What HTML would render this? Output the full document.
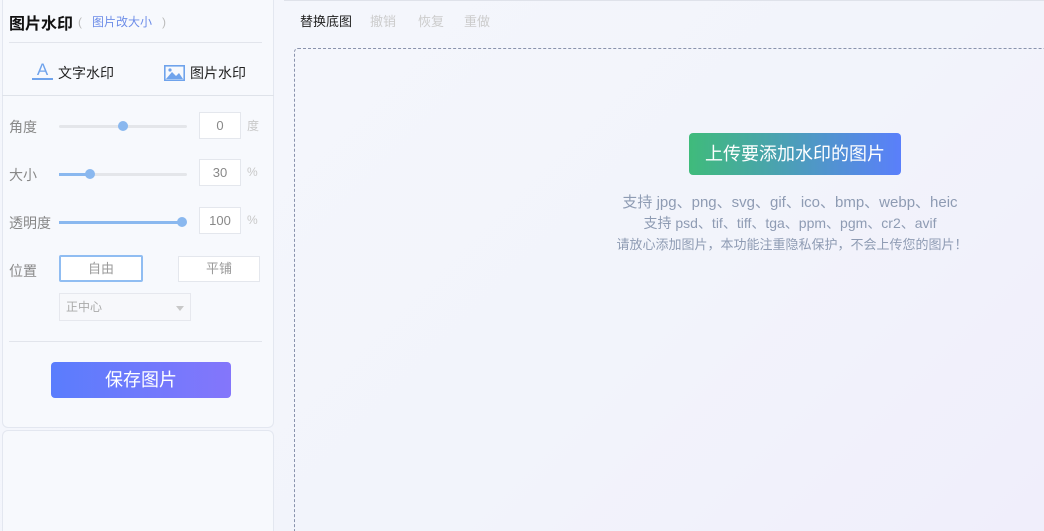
<!DOCTYPE html>
<html style="width:1044px;height:531px;overflow:hidden"><head><meta charset="utf-8"><style>
*{box-sizing:border-box;margin:0;padding:0}
body{width:1044px;height:531px;overflow:hidden;font-family:"Liberation Sans","Noto Sans CJK SC",sans-serif;background:linear-gradient(135deg,#f5f7fc,#f2f4fb 60%,#f0eefb);position:relative}
.side{position:absolute;left:2px;top:0;width:272px;height:428px;border:1px solid #e3e7f0;border-top:none;border-radius:0 0 6px 6px;background:#f7f9fd}
.side2{position:absolute;left:2px;top:430px;width:272px;height:101px;border:1px solid #e3e7f0;border-bottom:none;border-radius:6px 6px 0 0;background:#f7f9fd}
.abs{position:absolute}
.lbl{color:#888;font-size:14px}
.track{position:absolute;height:3px;background:#e4e6ea;left:59px;width:128px;border-radius:2px}
.fill{position:absolute;height:3px;background:#8ab8ef;left:0;top:0}
.dot{position:absolute;width:10px;height:10px;border-radius:50%;background:#8ab8ef;top:-4px}
.inp{position:absolute;left:199px;width:42px;height:27px;border:1px solid #e4e7ed;background:#fff;color:#888;font-size:13px;text-align:center;line-height:25px}
.unit{position:absolute;left:247px;color:#c8c8c8;font-size:12px}
.line{position:absolute;left:9px;width:253px;height:1px;background:#e2e5ec}
</style></head><body>
<div class="side"></div><div class="side2"></div>
<div class="abs" style="left:9px;top:10px;font-size:16px;font-weight:bold;color:#111">图片水印</div>
<div class="abs" style="left:78px;top:13px;font-size:12px;color:#bbb">(&nbsp;&nbsp;&nbsp;<span style="color:#6d8de8">图片改大小</span>&nbsp;&nbsp;&nbsp;)</div>
<div class="line" style="top:42px"></div>
<div class="abs" style="left:32px;top:62px;width:21px;height:18px;color:#6fa3ec;font-size:17px;text-align:center;line-height:16px;border-bottom:2px solid #6fa3ec">A</div>
<div class="abs" style="left:58px;top:63px;font-size:14px;color:#222">文字水印</div>
<svg class="abs" style="left:164px;top:65px" width="21" height="16" viewBox="0 0 21 16"><rect x="0.8" y="0.8" width="19.4" height="14.4" fill="none" stroke="#6fa3ec" stroke-width="1.6"/><path d="M2 14 L8 7 L12 11 L15 8 L19 14Z" fill="#6fa3ec"/><circle cx="6" cy="5" r="1.6" fill="#6fa3ec"/></svg>
<div class="abs" style="left:190px;top:63px;font-size:14px;color:#222">图片水印</div>
<div class="abs" style="left:2px;top:95px;width:272px;height:1px;background:#dfe3ea"></div>

<div class="abs lbl" style="left:9px;top:117px">角度</div>
<div class="track" style="top:125px"><div class="dot" style="left:59px"></div></div>
<div class="inp" style="top:112px">0</div><div class="unit" style="top:117px">度</div>

<div class="abs lbl" style="left:9px;top:165px">大小</div>
<div class="track" style="top:173px"><div class="fill" style="width:31px"></div><div class="dot" style="left:26px"></div></div>
<div class="inp" style="top:159px">30</div><div class="unit" style="top:165px">%</div>

<div class="abs lbl" style="left:9px;top:213px">透明度</div>
<div class="track" style="top:221px"><div class="fill" style="width:123px"></div><div class="dot" style="left:118px"></div></div>
<div class="inp" style="top:207px">100</div><div class="unit" style="top:213px">%</div>

<div class="abs lbl" style="left:9px;top:261px">位置</div>
<div class="abs" style="left:59px;top:255px;width:84px;height:27px;border:2px solid #90bdf2;border-radius:2px;background:#fff;color:#999;font-size:13px;text-align:center;line-height:23px">自由</div>
<div class="abs" style="left:178px;top:256px;width:82px;height:26px;border:1px solid #e4e7ed;background:#fff;color:#999;font-size:13px;text-align:center;line-height:24px">平铺</div>
<div class="abs" style="left:59px;top:293px;width:132px;height:28px;border:1px solid #e6e8ee;background:#f7f8fb;color:#aaa;font-size:12px;line-height:26px;padding-left:6px">正中心<span style="position:absolute;right:6px;top:12px;border:4px solid transparent;border-top:5px solid #c8c8c8"></span></div>
<div class="line" style="top:341px"></div>
<div class="abs" style="left:51px;top:362px;width:180px;height:36px;border-radius:4px;background:linear-gradient(90deg,#5a7dfd,#8476fb);color:#fff;font-size:18px;text-align:center;line-height:36px">保存图片</div>

<div class="abs" style="left:284px;top:0;width:760px;height:1px;background:#dfe2ea"></div>
<div class="abs" style="left:300px;top:11px;font-size:13px;color:#222">替换底图</div>
<div class="abs" style="left:370px;top:11px;font-size:13px;color:#ccc">撤销</div>
<div class="abs" style="left:418px;top:11px;font-size:13px;color:#ccc">恢复</div>
<div class="abs" style="left:464px;top:11px;font-size:13px;color:#ccc">重做</div>
<div class="abs" style="left:294px;top:48px;width:760px;height:500px;border:1px dashed #8a93ad;border-radius:4px"></div>
<div class="abs" style="left:689px;top:133px;width:212px;height:42px;border-radius:4px;background:linear-gradient(90deg,#3fbb7b,#5a7ffb);color:#fff;font-size:18px;text-align:center;line-height:42px">上传要添加水印的图片</div>
<div class="abs" style="left:580px;top:193px;width:420px;text-align:center;color:#8e9bb3;font-size:15px;line-height:20px">支持 jpg、png、svg、gif、ico、bmp、webp、heic</div>
<div class="abs" style="left:580px;top:214px;width:420px;text-align:center;color:#8e9bb3;font-size:14px;line-height:18px">支持 psd、tif、tiff、tga、ppm、pgm、cr2、avif</div>
<div class="abs" style="left:582px;top:236px;width:420px;text-align:center;color:#8e9bb3;font-size:13px;line-height:18px">请放心添加图片，本功能注重隐私保护，不会上传您的图片！</div>
</body></html>
